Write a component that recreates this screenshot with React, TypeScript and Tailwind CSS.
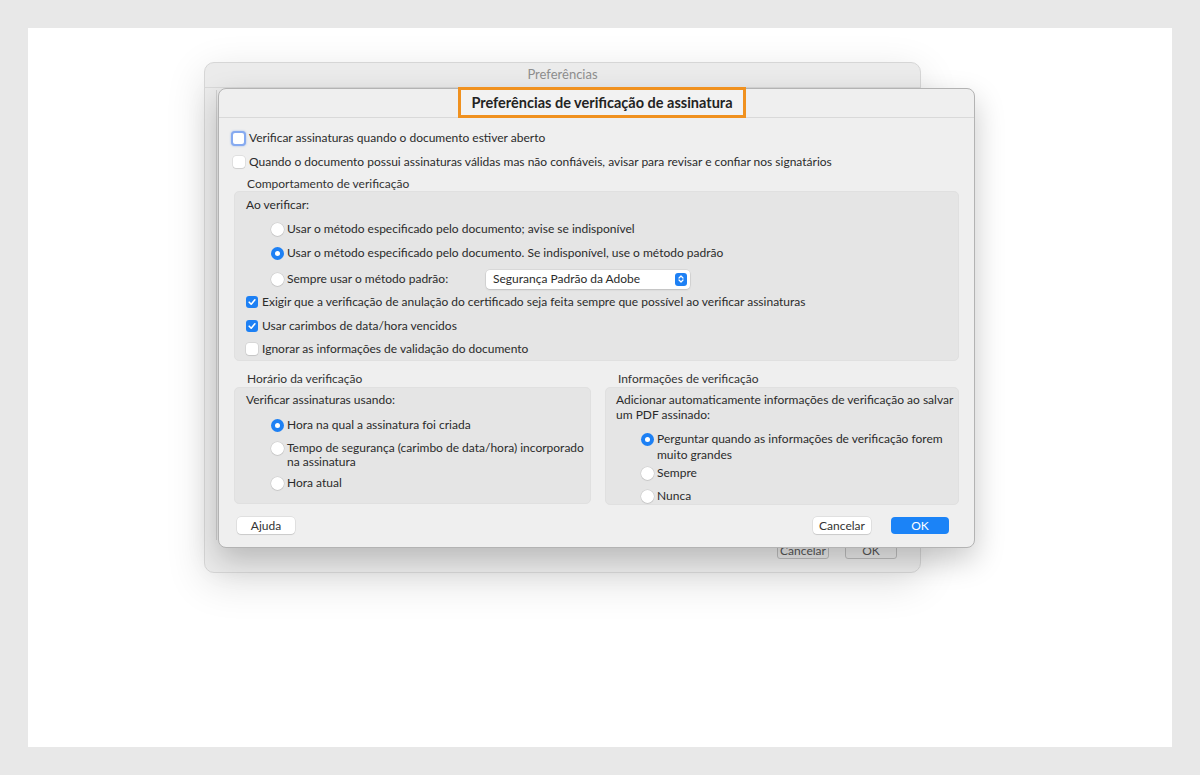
import React from "react";

function Radio({ on }: { on?: boolean }) {
  if (on) {
    return (
      <span className="w-[13px] h-[13px] rounded-full bg-[#1d80f4] flex items-center justify-center shrink-0">
        <span className="w-[5px] h-[5px] rounded-full bg-white" />
      </span>
    );
  }
  return (
    <span className="block w-[13px] h-[13px] rounded-full bg-white shadow-[0_0_0_0.5px_rgba(0,0,0,0.12),0_1px_1px_rgba(0,0,0,0.08)] shrink-0" />
  );
}

function Check({ on }: { on?: boolean }) {
  if (on) {
    return (
      <span className="w-[12px] h-[12px] rounded-[3px] bg-[#1d80f4] flex items-center justify-center shrink-0">
        <svg width="10" height="10" viewBox="0 0 10 10" fill="none">
          <path d="M2.2 5.2 L4.2 7.2 L7.9 2.8" stroke="white" strokeWidth="1.6" strokeLinecap="round" strokeLinejoin="round" />
        </svg>
      </span>
    );
  }
  return (
    <span className="block w-[12px] h-[12px] rounded-[3px] bg-white shadow-[0_0_0_0.5px_rgba(0,0,0,0.12),0_1px_1px_rgba(0,0,0,0.08)] shrink-0" />
  );
}

function Btn({ children, primary }: { children: React.ReactNode; primary?: boolean }) {
  return (
    <div
      className={`w-[58px] h-[17px] rounded-[4px] flex items-center justify-center text-[12px] leading-none ${
        primary
          ? "bg-[#1b83f7] text-white"
          : "bg-white text-[#333] shadow-[0_0_0_0.5px_rgba(0,0,0,0.12),0_1px_1px_rgba(0,0,0,0.1)]"
      }`}
    >
      {children}
    </div>
  );
}

function BackWindow() {
  return (
    <div className="absolute left-[176px] top-[34px] w-[717px] h-[511px] rounded-[10px] bg-[#ebebeb] border border-[#d6d6d6] shadow-[0_10px_40px_rgba(0,0,0,0.12)] flex flex-col">
      <div className="h-[25px] flex items-center justify-center text-[13px] text-[#8e8e8e] border-b border-[#d9d9d9]">
        Preferências
      </div>
      <div className="flex-1 flex flex-col pl-[11px] pr-[12px]">
        <div className="flex-1 border-l border-[#cfcfcf] mt-[2px] mb-[2px]" />
        <div className="h-[30px] flex items-start justify-end gap-[16px] pr-[11px] pt-[1px]">
          <div className="w-[52px] h-[16px] rounded-[3px] border border-[#bdbdbd] bg-[#e9e9e9] text-[12px] text-[#555] flex items-center justify-center leading-none">
            Cancelar
          </div>
          <div className="w-[52px] h-[16px] rounded-[3px] border border-[#bdbdbd] bg-[#e9e9e9] text-[12px] text-[#555] flex items-center justify-center leading-none">
            OK
          </div>
        </div>
      </div>
    </div>
  );
}

function Dialog() {
  return (
    <div className="absolute left-[190px] top-[60px] w-[757px] h-[460px] rounded-[8px] bg-[#efefef] border border-[#b3b3b3] shadow-[0_12px_30px_rgba(0,0,0,0.22)] flex flex-col text-[12px] text-[#2b2b2b]">
      {/* title bar */}
      <div className="h-[29px] shrink-0 border-b border-[#d9d9d9] flex justify-center">
        <div className="ml-[11px] -mt-[2px] h-[31px] px-[10px] border-[3px] border-[#f0911f] bg-[#f2f2f2] flex items-center text-[14.5px] font-bold text-[#232323]">
          Preferências de verificação de assinatura
        </div>
      </div>

      <div className="flex-1 flex flex-col px-[14px] pt-[10px]">
        <div className="h-[20px] flex items-center -ml-[2px]">
          <span className="w-[15px] h-[15px] rounded-[4px] border-2 border-[#86aaf0] bg-white shadow-[0_0_2px_rgba(60,120,230,0.5)] shrink-0" />
          <span className="ml-[3px]">Verificar assinaturas quando o documento estiver aberto</span>
        </div>
        <div className="h-[20px] mt-[4px] flex items-center gap-[4px]">
          <Check />
          <span>Quando o documento possui assinaturas válidas mas não confiáveis, avisar para revisar e confiar nos signatários</span>
        </div>

        <div className="h-[14px] mt-[5px] flex items-center pl-[14px] text-[#333]">Comportamento de verificação</div>
        <div className="ml-[1px] mr-[1px] rounded-[5px] bg-[#e5e5e5] border border-[#e0e0e0] pl-[11px] pt-[3px] pb-[1px] flex flex-col">
          <div className="h-[20px] flex items-center">Ao verificar:</div>
          <div className="h-[20px] mt-[4px] flex items-center gap-[3px] pl-[25px]">
            <Radio />
            <span>Usar o método especificado pelo documento; avise se indisponível</span>
          </div>
          <div className="h-[20px] mt-[4px] flex items-center gap-[3px] pl-[25px]">
            <Radio on />
            <span>Usar o método especificado pelo documento. Se indisponível, use o método padrão</span>
          </div>
          <div className="h-[20px] mt-[6px] flex items-center gap-[3px] pl-[25px]">
            <Radio />
            <span className="w-[196px]">Sempre usar o método padrão:</span>
            <div className="w-[204px] h-[19px] rounded-[4px] bg-white shadow-[0_0_0_0.5px_rgba(0,0,0,0.1),0_1px_2px_rgba(0,0,0,0.12)] flex items-center justify-between pl-[7px] pr-[3px]">
              <span>Segurança Padrão da Adobe</span>
              <span className="w-[12px] h-[13px] rounded-[3px] bg-[#1d80f4] flex items-center justify-center">
                <svg width="8" height="10" viewBox="0 0 8 10" fill="none">
                  <path d="M2 4 L4 2 L6 4 M2 6 L4 8 L6 6" stroke="white" strokeWidth="1.2" strokeLinecap="round" strokeLinejoin="round" />
                </svg>
              </span>
            </div>
          </div>
          <div className="h-[20px] mt-[3px] flex items-center gap-[4px]">
            <Check on />
            <span>Exigir que a verificação de anulação do certificado seja feita sempre que possível ao verificar assinaturas</span>
          </div>
          <div className="h-[20px] mt-[4px] flex items-center gap-[4px]">
            <Check on />
            <span>Usar carimbos de data/hora vencidos</span>
          </div>
          <div className="h-[20px] mt-[3px] flex items-center gap-[4px]">
            <Check />
            <span>Ignorar as informações de validação do documento</span>
          </div>
        </div>

        <div className="mt-[11px] mx-[1px] grid grid-cols-[357px_354px] gap-[14px]">
          <div className="flex flex-col">
            <div className="h-[14px] flex items-center pl-[13px] text-[#333]">Horário da verificação</div>
            <div className="mt-[1px] h-[117px] rounded-[5px] bg-[#e5e5e5] border border-[#e0e0e0] pl-[11px] pt-[4px] flex flex-col">
              <div className="h-[16px] flex items-center">Verificar assinaturas usando:</div>
              <div className="h-[16px] mt-[9px] flex items-center gap-[3px] pl-[25px]">
                <Radio on />
                <span>Hora na qual a assinatura foi criada</span>
              </div>
              <div className="mt-[8px] flex items-start gap-[3px] pl-[25px] leading-[14px]">
                <span className="block mt-[1px]">
                  <Radio />
                </span>
                <span>
                  Tempo de segurança (carimbo de data/hora) incorporado
                  <br />
                  na assinatura
                </span>
              </div>
              <div className="h-[16px] mt-[6px] flex items-center gap-[3px] pl-[25px]">
                <Radio />
                <span>Hora atual</span>
              </div>
            </div>
          </div>
          <div className="flex flex-col">
            <div className="h-[14px] flex items-center pl-[13px] text-[#333]">Informações de verificação</div>
            <div className="mt-[1px] h-[118px] overflow-hidden rounded-[5px] bg-[#e5e5e5] border border-[#e0e0e0] pl-[10px] pt-[4px] flex flex-col">
              <div className="leading-[15px]">
                Adicionar automaticamente informações de verificação ao salvar
                <br />
                um PDF assinado:
              </div>
              <div className="mt-[9px] flex items-start gap-[3px] pl-[25px] leading-[16px]">
                <span className="block mt-[1.5px]">
                  <Radio on />
                </span>
                <span>
                  Perguntar quando as informações de verificação forem
                  <br />
                  muito grandes
                </span>
              </div>
              <div className="h-[16px] mt-[2px] flex items-center gap-[3px] pl-[25px]">
                <Radio />
                <span>Sempre</span>
              </div>
              <div className="h-[16px] mt-[7px] flex items-center gap-[3px] pl-[25px]">
                <Radio />
                <span>Nunca</span>
              </div>
            </div>
          </div>
        </div>

        <div className="mt-[12px] h-[17px] flex items-center justify-between pl-[4px] pr-[11px]">
          <div className="w-[59px]">
            <Btn>Ajuda</Btn>
          </div>
          <div className="flex gap-[20px]">
            <Btn>Cancelar</Btn>
            <Btn primary>OK</Btn>
          </div>
        </div>
      </div>
    </div>
  );
}

export default function App() {
  return (
    <div className="w-full h-[775px] bg-[#e8e8e8] p-[28px] font-['Lato',sans-serif]">
      <div className="relative w-full h-full bg-white overflow-hidden">
        <BackWindow />
        <Dialog />
      </div>
    </div>
  );
}
